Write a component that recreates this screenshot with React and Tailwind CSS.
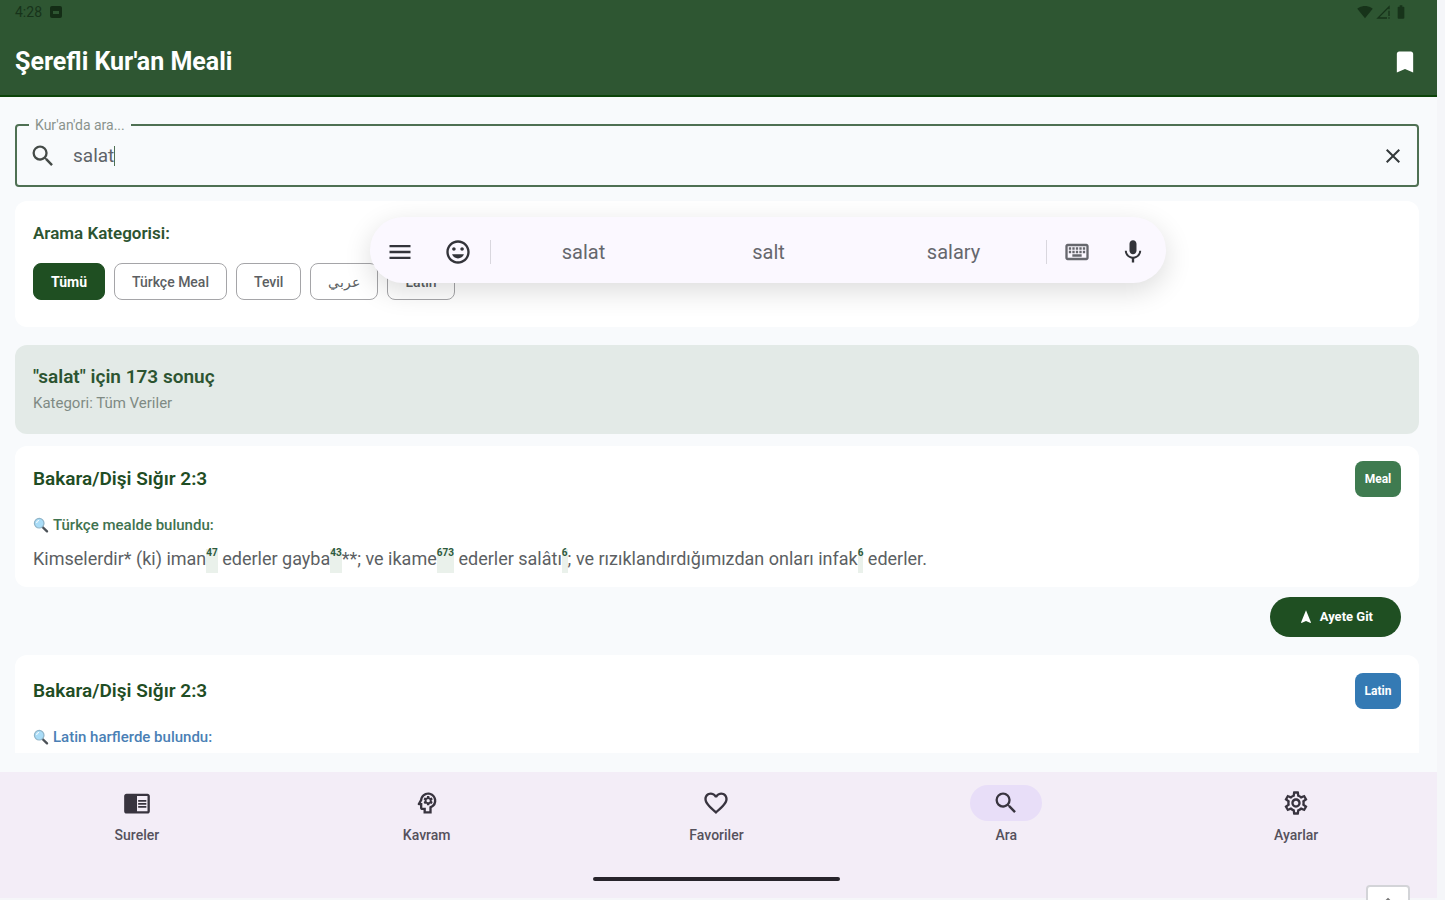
import {
  MdSearch, MdClose, MdMenu, MdMic, MdOutlineKeyboard, MdBookmark, MdChromeReaderMode,
  MdFavoriteBorder, MdOutlinePsychology, MdOutlineSettings, MdOutlineMood, MdNavigation,
  MdSignalWifi4Bar, MdSignalCellularConnectedNoInternet0Bar, MdBatteryFull, MdKeyboardArrowUp,
} from "react-icons/md";

const categories = ["Tümü", "Türkçe Meal", "Tevil", "عربي", "Latin"];

const tabs = [
  { label: "Sureler", Icon: MdChromeReaderMode },
  { label: "Kavram", Icon: MdOutlinePsychology },
  { label: "Favoriler", Icon: MdFavoriteBorder },
  { label: "Ara", Icon: MdSearch, active: true },
  { label: "Ayarlar", Icon: MdOutlineSettings },
];

function Note({ children }) {
  return (
    <a href="#dipnot" className="inline-block h-6 bg-[#eaf1eb] align-bottom text-[10px] font-bold leading-[8px] text-[#2d5a3d]">
      {children}
    </a>
  );
}

function Lens() {
  return (
    <svg viewBox="0 0 16 16" className="size-4" aria-hidden="true">
      <path d="M9.5 10 14 14.3" stroke="#4b5157" strokeWidth="2.4" strokeLinecap="round" />
      <circle cx="6.2" cy="6.2" r="4.8" fill="#a9dcf7" stroke="#8fb4c8" strokeWidth="1.2" />
      <path d="M3.6 6A2.8 2.8 0 0 1 6 3.4" stroke="#fff" strokeWidth="1" fill="none" />
    </svg>
  );
}

function ResultHead({ badge, badgeClass, found, foundClass }) {
  return (
    <>
      <div className="flex items-center justify-between">
        <h3 className="text-[19px] font-semibold leading-7 text-[#1f4d24]">Bakara/Dişi Sığır 2:3</h3>
        <span className={"flex h-9 w-[46px] items-center justify-center rounded-lg text-xs font-bold text-white " + badgeClass}>
          {badge}
        </span>
      </div>
      <p className={"mt-4 flex items-center gap-1 text-[15px] font-medium leading-6 " + foundClass}>
        <Lens />
        {found}
      </p>
    </>
  );
}

export default function App() {
  return (
    <div className="relative flex h-screen flex-col overflow-hidden bg-[#f5f6f9] pr-2 pb-0.5 font-[Roboto,'Noto_Sans',sans-serif]">
      <header className="border-b-2 border-[#0c4409] bg-[#2e5632] pr-[18px] pl-[15px] text-white">
        <div className="flex h-6 items-center justify-between text-[#17331a]">
          <div className="flex items-center gap-2 text-sm">
            <span>4:28</span>
            <svg viewBox="0 0 12 12" className="size-3" aria-hidden="true">
              <rect width="12" height="12" rx="2" fill="#142d16" />
              <path d="M3 5h6v3H3z" fill="#2e5632" />
            </svg>
          </div>
          <div className="flex items-center gap-0.5 pr-2.5">
            <MdSignalWifi4Bar className="size-4" />
            <MdSignalCellularConnectedNoInternet0Bar className="size-4" />
            <MdBatteryFull className="size-4" />
          </div>
        </div>
        <div className="flex h-[71px] items-center justify-between pt-1">
          <h1 className="text-[25px] font-bold leading-8">Şerefli Kur'an Meali</h1>
          <button aria-label="Yer imleri"><MdBookmark className="size-7" /></button>
        </div>
      </header>

      <main className="relative flex min-h-0 flex-1 flex-col bg-[#f8fafc] pr-[18px] pl-[15px] pt-5 pb-[19px]">
        <fieldset className="rounded border-2 border-[#4f7053] px-3">
          <legend className="px-1.5 text-sm leading-4 text-[#8a938c]">
            <label htmlFor="ara">Kur'an'da ara...</label>
          </legend>
          <div className="flex h-[52px] items-center pb-1.5">
            <MdSearch className="size-7 text-[#444a47]" />
            <span className="ml-4 flex flex-1 items-center">
              <input id="ara" defaultValue="salat" className="field-sizing-content bg-transparent text-[19px] leading-6 text-[#5f6368] outline-none" />
              <span className="h-5 w-px bg-[#4f7053]" />
            </span>
            <button aria-label="Temizle"><MdClose className="size-6 text-[#33383a]" /></button>
          </div>
        </fieldset>

        <div className="flex min-h-0 flex-1 flex-col overflow-hidden pt-3.5">
          <section className="shrink-0 rounded-xl bg-white px-[18px] pt-5 pb-[27px]">
            <h2 className="text-[17px] font-semibold leading-6 text-[#2c5431]">Arama Kategorisi:</h2>
            <div className="mt-[18px] flex gap-[9px]">
              {categories.map((name, i) => (
                <button
                  key={name}
                  className={
                    "h-[37px] rounded-lg border px-[17px] text-sm " +
                    (i === 0 ? "border-[#1f4f22] bg-[#1f4f22] font-bold text-white" : "border-[#a5a5a8] font-medium text-[#5c5f63]")
                  }
                >
                  {name}
                </button>
              ))}
            </div>
          </section>

          <section className="mt-[18px] shrink-0 rounded-xl bg-[#e3eae7] px-[18px] pt-[18px] pb-[19px]">
            <h2 className="text-[19px] font-semibold leading-7 text-[#2c5431]">"salat" için 173 sonuç</h2>
            <p className="text-[15px] leading-6 text-[#7f8a84]">Kategori: Tüm Veriler</p>
          </section>

          <article className="mt-3 shrink-0 rounded-xl bg-white px-[18px] pt-[15px] pb-3.5">
            <ResultHead badge="Meal" badgeClass="bg-[#3f7b50]" found="Türkçe mealde bulundu:" foundClass="text-[#3f7350]" />
            <p className="mt-2 text-lg leading-7 text-[#5c5f63]">
              Kimselerdir* (ki) iman<Note>47</Note> ederler gayba<Note>43</Note>**; ve ikame<Note>673</Note> ederler salâtı<Note>6</Note>; ve rızıklandırdığımızdan onları infak<Note>6</Note> ederler.
            </p>
          </article>

          <div className="flex shrink-0 justify-end px-[18px] py-2.5">
            <button className="flex h-10 items-center gap-1.5 rounded-full bg-[#1f4f22] px-7 text-[13px] font-bold text-white">
              <MdNavigation className="size-4" />
              Ayete Git
            </button>
          </div>

          <article className="mt-2 flex-1 rounded-t-xl bg-white px-[18px] pt-[18px]">
            <ResultHead badge="Latin" badgeClass="bg-[#347ab4]" found="Latin harflerde bulundu:" foundClass="text-[#4a7fb5]" />
          </article>
        </div>

        <div className="absolute left-[370px] top-[120px] flex h-[66px] w-[796px] max-w-full items-center rounded-full bg-[#fbf8ff] pt-1 pr-[19px] pl-4 text-[#33343a] shadow-[0_8px_28px_rgba(0,0,0,0.14)]">
          <button aria-label="Menü"><MdMenu className="size-7" /></button>
          <button aria-label="Emoji" className="ml-[30px]"><MdOutlineMood className="size-7" /></button>
          <div className="ml-[18px] flex flex-1 border-x border-[#d9d7de] text-xl leading-6 text-[#66676d]">
            <button className="flex-1">salat</button>
            <button className="flex-1">salt</button>
            <button className="flex-1">salary</button>
          </div>
          <button aria-label="Klavye" className="ml-4"><MdOutlineKeyboard className="size-7 text-[#66676d]" /></button>
          <button aria-label="Sesli giriş" className="ml-7"><MdMic className="size-7" /></button>
        </div>
      </main>

      <nav className="flex h-[126px] shrink-0 flex-col items-center bg-[#f3edf7] pt-[13px] pr-1">
        <div className="grid w-full grid-cols-5 gap-4">
          {tabs.map(({ label, Icon, active }) => (
            <a key={label} href={"#" + label} className="flex flex-col items-center gap-1 text-sm font-medium text-[#55515c]">
              <span className={"flex h-9 w-[72px] items-center justify-center rounded-full text-[#38343f] " + (active ? "bg-[#e8def8]" : "")}>
                <Icon className="size-7" />
              </span>
              {label}
            </a>
          ))}
        </div>
        <div className="mt-8 h-1 w-[247px] rounded-full bg-[#27242b]" />
      </nav>

      <button aria-label="Yukarı" className="absolute -bottom-7 right-[35px] flex h-[43px] w-11 justify-center rounded border-2 border-[#d3d4d8] bg-white pt-1 text-[#777]">
        <MdKeyboardArrowUp className="size-5" />
      </button>
    </div>
  );
}
